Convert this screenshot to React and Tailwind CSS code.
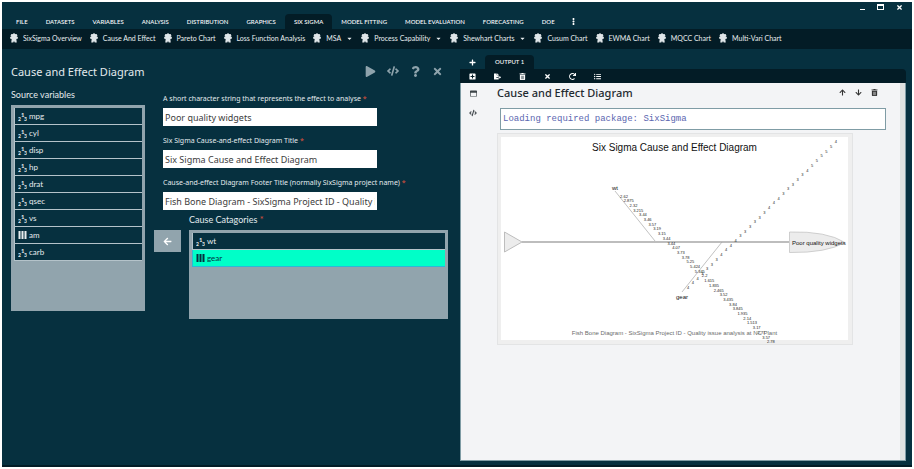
import {
  FaPlay, FaCode, FaQuestion, FaTimes, FaPlus, FaPlusSquare, FaFileExport, FaTrashAlt,
  FaRedo, FaListUl, FaArrowUp, FaArrowDown, FaArrowLeft, FaRegWindowMaximize, FaEllipsisV, FaCaretDown,
} from "react-icons/fa";

const MENU = ["FILE", "DATASETS", "VARIABLES", "ANALYSIS", "DISTRIBUTION", "GRAPHICS", "SIX SIGMA", "MODEL FITTING", "MODEL EVALUATION", "FORECASTING", "DOE"];

const RIBBON = [
  ["SixSigma Overview"], ["Cause And Effect"], ["Pareto Chart"], ["Loss Function Analysis"],
  ["MSA", true], ["Process Capability", true], ["Shewhart Charts", true],
  ["Cusum Chart"], ["EWMA Chart"], ["MQCC Chart"], ["Multi-Vari Chart"],
];

const SOURCES = [
  ["mpg", "scale"], ["cyl", "scale"], ["disp", "scale"], ["hp", "scale"], ["drat", "scale"],
  ["qsec", "scale"], ["vs", "scale"], ["am", "factor"], ["carb", "scale"],
];

const FIELDS = [
  ["effect", "A short character string that represents the effect to analyse", "Poor quality widgets"],
  ["title", "Six Sigma Cause-and-effect Diagram Title", "Six Sigma Cause and Effect Diagram"],
  ["footer", "Cause-and-effect Diagram Footer Title (normally SixSigma project name)", "Fish Bone Diagram - SixSigma Project ID - Quality issue analysis at NC Plant"],
];

const WT = ["2.62", "2.875", "2.32", "3.215", "3.44", "3.46", "3.57", "3.19", "3.15", "3.44", "3.44", "4.07", "3.73", "3.78", "5.25", "5.424", "5.345", "2.2", "1.615", "1.835", "2.465", "3.52", "3.435", "3.84", "3.845", "1.935", "2.14", "1.513", "3.17", "2.77", "3.57", "2.78"];
const GEAR = "44433334444333333444333334555554".split("");

function Badge() {
  return (
    <svg viewBox="0 0 16 19" className="h-[10px] w-2 shrink-0 fill-[#dfe5e8]" aria-hidden="true">
      <circle cx="8" cy="7" r="5.5" />
      <circle cx="8" cy="2.4" r="2.2" />
      <circle cx="4" cy="4" r="2.4" />
      <circle cx="12" cy="4" r="2.4" />
      <circle cx="2.6" cy="9" r="2.5" />
      <circle cx="13.4" cy="9" r="2.5" />
      <path d="M3.500 10h9l1 8.500H9.500L8 15.500 6.500 18.500H2.500z" />
    </svg>
  );
}

function TypeIcon({ type }) {
  if (type === "factor") {
    return (
      <svg viewBox="0 0 8 8" className="h-2 w-[9px] shrink-0 fill-current" aria-hidden="true">
        <path d="M0 0h2v8H0zM3 0h2v8H3zM6 0h2v8H6z" />
      </svg>
    );
  }
  return (
    <svg viewBox="0 0 9 9" className="h-[9px] w-[9px] shrink-0 fill-current" aria-hidden="true">
      <text x="0" y="9" fontSize="5" fontWeight="bold">2</text>
      <text x="3" y="5" fontSize="6" fontWeight="bold">1</text>
      <text x="6" y="9" fontSize="5" fontWeight="bold">3</text>
    </svg>
  );
}

function Variable({ name, type, selected }) {
  const tone = selected ? "border-[#2fb6d6] bg-[#00ffc8] text-[#04303f]" : "border-[#b4c3ca] bg-[#06303f] text-[#e6ecee]";
  return (
    <li className={`flex h-[17px] items-center gap-[2px] border-b border-l px-[3px] text-[8px] leading-none ${tone}`}>
      <TypeIcon type={type} />
      <span>{name}</span>
    </li>
  );
}

function IconButton({ label, icon: Icon, className = "" }) {
  return (
    <button type="button" aria-label={label} className={`flex items-center justify-center ${className}`}>
      <Icon />
    </button>
  );
}

function Header() {
  return (
    <header>
      <div className="flex h-3 items-start justify-end gap-3 pr-[9px] pt-[2px] text-white">
        <button type="button" aria-label="Minimize" className="flex h-[6px] w-[5px] items-end"><span className="h-px w-full bg-white" /></button>
        <button type="button" aria-label="Maximize" className="h-[6px] w-[7px] border border-t-2 border-white" />
        <IconButton label="Close window" icon={FaTimes} className="text-[7px]" />
      </div>
      <nav className="flex h-[15px] items-stretch pl-[5px] text-[6px] font-medium leading-none text-white">
        {MENU.map((m) => (
          <button key={m} type="button" className={`whitespace-nowrap rounded-t-sm px-[9px] ${m === "SIX SIGMA" ? "bg-[#031c26]" : ""}`}>{m}</button>
        ))}
        <IconButton label="More" icon={FaEllipsisV} className="px-[6px] text-[7px]" />
      </nav>
      <div className="flex h-5 items-center gap-2 bg-[#031c26] pb-[2px] pl-2 text-[7px] leading-none text-[#e9eef0]">
        {RIBBON.map(([name, menu]) => (
          <button key={name} type="button" className="flex items-center gap-[5px] whitespace-nowrap">
            <Badge />
            <span>{name}</span>
            {menu && <FaCaretDown className="h-[7px] w-[7px]" />}
          </button>
        ))}
      </div>
    </header>
  );
}

function Dialog() {
  return (
    <section className="min-w-0 pl-[9px] pr-3 text-[#e3eaed]">
      <div className="flex h-10 items-center justify-between pr-[5px] pt-1">
        <h1 className="font-['Noto_Sans',sans-serif] text-[11px] leading-none">Cause and Effect Diagram</h1>
        <div className="flex items-center gap-[11px] text-[11px] text-[#8ea3ac]">
          <IconButton label="Run" icon={FaPlay} />
          <IconButton label="Show code" icon={FaCode} className="text-[12px]" />
          <IconButton label="Help" icon={FaQuestion} />
          <IconButton label="Close dialog" icon={FaTimes} />
        </div>
      </div>
      <div className="flex gap-[9px]">
        <div className="w-[134px] shrink-0">
          <h2 className="pb-1 text-[9px] leading-[12px]">Source variables</h2>
          <ul className="h-[206px] bg-[#91a4ad] p-[3px]">
            {SOURCES.map(([name, type]) => <Variable key={name} name={name} type={type} />)}
          </ul>
        </div>
        <div className="min-w-0 flex-1 pt-[3px]">
          <div className="flex flex-col gap-2 pl-[9px] font-['Noto_Sans',sans-serif]">
            {FIELDS.map(([id, label, value]) => (
              <div key={id}>
                <label htmlFor={id} className="block h-4 whitespace-nowrap text-[7px] leading-[14px]">
                  {label} <span className="text-[#e0523c]">*</span>
                </label>
                <input id={id} defaultValue={value} className="block h-[18px] w-[214px] bg-white px-[2px] text-[9px] text-[#3c3c3c]" />
              </div>
            ))}
          </div>
          <div className="flex gap-2 pt-1">
            <div className="w-[27px] shrink-0 pt-4">
              <IconButton label="Move back to source" icon={FaArrowLeft} className="h-[22px] w-full bg-[#91a4ad] text-[9px] text-white" />
            </div>
            <div className="min-w-0 flex-1">
              <h2 className="pb-1 text-[9px] leading-[12px]">Cause Catagories <span className="text-[#e0523c]">*</span></h2>
              <ul className="h-[89px] bg-[#91a4ad] p-[3px]">
                <Variable name="wt" type="scale" />
                <Variable name="gear" type="factor" selected />
              </ul>
            </div>
          </div>
        </div>
      </div>
    </section>
  );
}

function FishBone() {
  return (
    <svg viewBox="497 133 356 212" className="w-[356px] font-['Liberation_Sans',sans-serif]" role="img" aria-label="Cause and effect chart">
      <rect x="497" y="133" width="356" height="212" fill="#e3e4e5" />
      <rect x="498" y="134" width="354" height="210" fill="#efefef" />
      <rect x="501" y="137" width="347" height="203" fill="#fff" />
      <text x="674.5" y="151" fontSize="10" textAnchor="middle" fill="#111">Six Sigma Cause and Effect Diagram</text>
      <path d="M522 242H789" stroke="#bdbdbd" strokeWidth="2" />
      <path d="M504.500 232V252L522 242Z" fill="#ececec" stroke="#bdbdbd" />
      <path d="M789.500 232V252.500Q827 253 845 242.500Q827 231 789.500 232Z" fill="#ececec" stroke="#bdbdbd" strokeWidth=".7" />
      <path d="M615 191L655 241M682 292L722 242" stroke="#a8a8a8" strokeWidth=".7" />
      <g fontSize="6" fill="#111">
        <text x="612" y="190">wt</text>
        <text x="676" y="299">gear</text>
        <text x="792" y="245">Poor quality widgets</text>
      </g>
      <g fontSize="4" fill="#222" textAnchor="middle">
        {WT.map((v, i) => <text key={i} x={624 + i * 4.74} y={197.5 + i * 4.7}>{v}</text>)}
        {GEAR.map((v, i) => <text key={i} x={688 + i * 4.77} y={289 - i * 4.7}>{v}</text>)}
      </g>
      <text x="674.5" y="335" fontSize="6" textAnchor="middle" fill="#6b6b6b">Fish Bone Diagram - SixSigma Project ID - Quality issue analysis at NC Plant</text>
    </svg>
  );
}

function Output() {
  return (
    <section className="flex min-w-0 flex-col pb-1 pr-[6px] pt-[6px]">
      <div className="flex h-[14px] text-white">
        <IconButton label="New output" icon={FaPlus} className="w-[25px] text-[7px]" />
        <button type="button" className="rounded-t-sm bg-[#031c26] px-[10px] text-[6px] font-medium leading-none">OUTPUT 1</button>
      </div>
      <div className="flex h-[14px] items-center rounded-tr-sm bg-[#031c26] text-[7px] text-white">
        {[["Add", FaPlusSquare], ["Export", FaFileExport], ["Delete", FaTrashAlt], ["Clear", FaTimes], ["Refresh", FaRedo], ["List", FaListUl]].map(([l, I]) => (
          <IconButton key={l} label={l} icon={I} className="w-[25px]" />
        ))}
      </div>
      <div className="flex flex-1 border border-t-0 border-[#7f9ca5] bg-[#f3f4f6]">
        <div className="flex w-6 shrink-0 flex-col items-center gap-3 pt-[7px] text-[7px] text-[#3d4448]">
          <IconButton label="Collapse" icon={FaRegWindowMaximize} />
          <IconButton label="View code" icon={FaCode} className="text-[8px]" />
        </div>
        <div className="min-w-0 flex-1 pl-3 pr-[14px]">
          <div className="flex h-[19px] items-center justify-between pr-2">
            <h2 className="font-['Noto_Sans',sans-serif] text-[11px] font-medium leading-none text-[#1f2a30]">Cause and Effect Diagram</h2>
            <div className="flex gap-[9px] text-[7px] text-[#333]">
              <IconButton label="Move up" icon={FaArrowUp} />
              <IconButton label="Move down" icon={FaArrowDown} />
              <IconButton label="Delete result" icon={FaTrashAlt} />
            </div>
          </div>
          <pre className="ml-[3px] mt-[6px] h-[22px] border border-[#7f9ca5] bg-white px-[2px] font-['Liberation_Mono',monospace] text-[9px] leading-5 text-[#5b66b0]">Loading required package: SixSigma</pre>
          <div className="pt-[3px]"><FishBone /></div>
        </div>
        <div className="w-[5px] shrink-0 bg-[#dfe2e1]" />
      </div>
    </section>
  );
}

export default function App() {
  return (
    <div className="flex min-h-screen bg-white p-[2px] font-[Lato,sans-serif]">
      <div className="flex min-w-0 flex-1 flex-col border-b-2 border-[#031c26] bg-[#06303f]">
        <Header />
        <main className="grid flex-1 grid-cols-[458fr_452fr]">
          <Dialog />
          <Output />
        </main>
      </div>
    </div>
  );
}
